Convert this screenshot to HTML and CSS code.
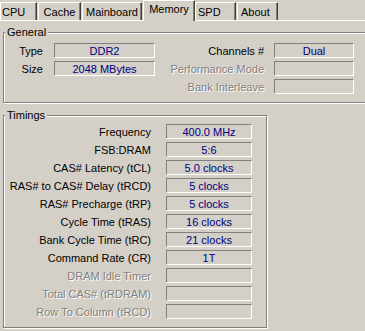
FILE: index.html
```html
<!DOCTYPE html>
<html lang="en">
<head>
  <meta charset="UTF-8">
  <title>Memory</title>
  <link rel="stylesheet" href="styles.css">
</head>
<body>

<div class="tabs">
  <div class="tab tab-cpu">CPU</div>
  <div class="tab tab-cache">Cache</div>
  <div class="tab tab-mainboard">Mainboard</div>
  <div class="tab tab-memory active">Memory</div>
  <div class="tab tab-spd">SPD</div>
  <div class="tab tab-about">About</div>
</div>

<div class="group general">
  <div class="group-title">General</div>
  <div class="general-grid">
    <span class="label">Type</span>
    <span class="field">DDR2</span>
    <span class="label label-right">Channels #</span>
    <span class="field">Dual</span>

    <span class="label">Size</span>
    <span class="field">2048 MBytes</span>
    <span class="label label-right disabled">Performance Mode</span>
    <span class="field"></span>

    <span class="label label-right disabled col-3">Bank Interleave</span>
    <span class="field"></span>
  </div>
</div>

<div class="group timings">
  <div class="group-title">Timings</div>
  <div class="timings-grid">
    <span class="label">Frequency</span>
    <span class="field">400.0 MHz</span>
    <span class="label">FSB:DRAM</span>
    <span class="field">5:6</span>
    <span class="label">CAS# Latency (tCL)</span>
    <span class="field">5.0 clocks</span>
    <span class="label">RAS# to CAS# Delay (tRCD)</span>
    <span class="field">5 clocks</span>
    <span class="label">RAS# Precharge (tRP)</span>
    <span class="field">5 clocks</span>
    <span class="label">Cycle Time (tRAS)</span>
    <span class="field">16 clocks</span>
    <span class="label">Bank Cycle Time (tRC)</span>
    <span class="field">21 clocks</span>
    <span class="label">Command Rate (CR)</span>
    <span class="field">1T</span>
    <span class="label disabled">DRAM Idle Timer</span>
    <span class="field"></span>
    <span class="label disabled">Total CAS# (tRDRAM)</span>
    <span class="field"></span>
    <span class="label disabled">Row To Column (tRCD)</span>
    <span class="field"></span>
  </div>
</div>

</body>
</html>
```

FILE: styles.css
```css
html,
body {
  margin: 0;
  height: 100%;
  overflow: hidden;
}

body {
  width: 365px;
  height: 331px;
  background: #d4d0c8;
  color: #000;
  font-family: 'Liberation Sans', Arial, sans-serif;
  font-size: 11px;
  line-height: 13px;
}

/* tab strip */

.tabs {
  display: flex;
  align-items: flex-end;
  height: 20px;
  border-bottom: 1px solid #fff;
}

.tab {
  box-sizing: border-box;
  height: 18px;
  padding-top: 3px;
  border-top: 1px solid #fff;
  border-left: 1px solid #fff;
  border-right: 1px solid #404040;
  box-shadow: inset -1px 0 #808080;
  white-space: nowrap;
  text-align: center;
}

.tab.active {
  height: 21px;
  margin-bottom: -1px;
  padding-top: 2px;
  background: #d4d0c8;
}

.tab-cpu {
  width: 37px;
  padding-left: 1px;
  text-align: left;
}

.tab-cache {
  width: 43px;
  margin-left: 1px;
}

.tab-mainboard {
  width: 60px;
  margin-left: 1px;
}

.tab-memory {
  width: 52px;
  margin-left: 1px;
}

.tab-spd {
  width: 41px;
  padding-left: 2px;
  text-align: left;
}

.tab-about {
  width: 41px;
  margin-left: 1px;
  padding-left: 3px;
  text-align: left;
}

/* group boxes */

.group {
  box-sizing: border-box;
  border: 1px solid #808080;
  box-shadow: inset 1px 1px #fff, 1px 1px #fff;
  padding-bottom: 8px;
}

.group-title {
  width: fit-content;
  margin: -7px 0 0 1px;
  padding: 0 2px;
  background: #d4d0c8;
  line-height: 13px;
}

/* the general box runs on past the right edge of the window */
.general {
  width: 362px;
  margin: 11px 0 0 3px;
  border-right: 0;
}

.timings {
  width: 264px;
  margin: 12px 0 0 3px;
}

.general-grid {
  display: grid;
  grid-template-columns: 50px 101px 119px 80px;
  grid-auto-rows: 15px;
  row-gap: 3px;
  margin-top: 4px;
}

.timings-grid {
  display: grid;
  grid-template-columns: 162px 86px;
  grid-auto-rows: 15px;
  row-gap: 3px;
  margin-top: 2px;
}

.label {
  padding-right: 11px;
  line-height: 17px;
  text-align: right;
  white-space: nowrap;
}

.timings .label {
  padding-right: 15px;
}

.label-right {
  padding-right: 10px;
}

.col-3 {
  grid-column: 3;
}

.disabled {
  color: #808080;
  text-shadow: 1px 1px #fff;
}

.field {
  box-sizing: border-box;
  height: 15px;
  border: 1px solid;
  border-color: #808080 #fff #fff #808080;
  color: #000080;
  line-height: 15px;
  text-align: center;
  white-space: nowrap;
}
```
